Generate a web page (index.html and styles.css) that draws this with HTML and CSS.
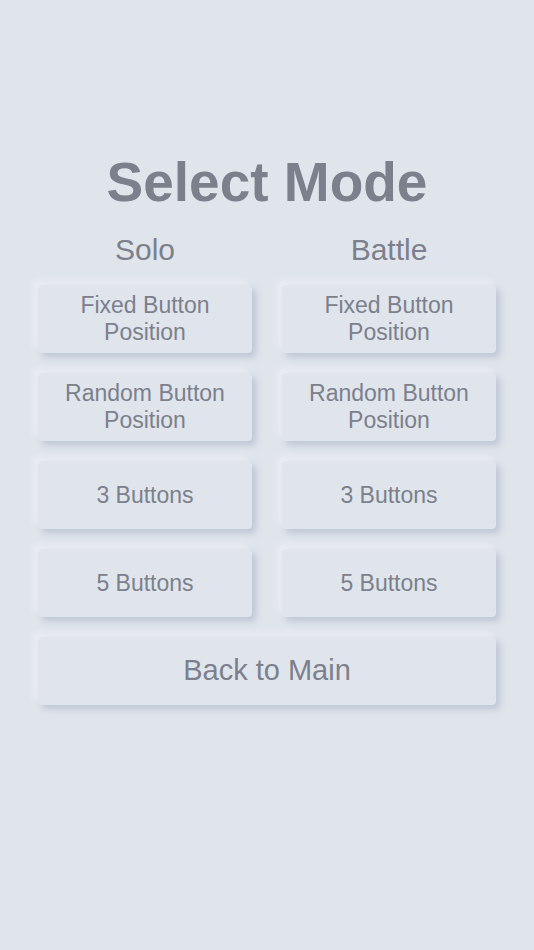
FILE: index.html
```html
<!DOCTYPE html>
<html lang="en">
<head>
  <meta charset="UTF-8">
  <meta name="viewport" content="width=device-width, initial-scale=1.0">
  <title>Select Mode</title>
  <link rel="stylesheet" href="styles.css">
</head>
<body>

<div class="menu">
  <h1 class="title">Select Mode</h1>

  <div class="modes">
    <div class="column-title">Solo</div>
    <div class="column-title">Battle</div>

    <button class="btn">Fixed Button<br>Position</button>
    <button class="btn">Fixed Button<br>Position</button>

    <button class="btn">Random Button<br>Position</button>
    <button class="btn">Random Button<br>Position</button>

    <button class="btn">3 Buttons</button>
    <button class="btn">3 Buttons</button>

    <button class="btn">5 Buttons</button>
    <button class="btn">5 Buttons</button>

    <button class="btn btn-wide">Back to Main</button>
  </div>
</div>

</body>
</html>
```

FILE: styles.css
```css
body {
  font-family: "Liberation Sans", Arial, sans-serif;
  background-color: #e0e5ec;
  color: #7b808c;
  margin: 0;
  padding: 0;
  min-height: 950px;
}
.menu {
  width: 458px;
  margin: 0 auto;
  padding: 151px 0 60px;
  text-align: center;
}
.title {
  font-size: 55px;
  line-height: 1.15;
  font-weight: bold;
  margin: 0 0 18px;
}
.modes {
  display: grid;
  grid-template-columns: 214px 214px;
  column-gap: 30px;
  row-gap: 20px;
}
.column-title {
  font-size: 30px;
  line-height: 1.15;
  margin-top: 1px;
  margin-bottom: -3px;
}
.btn {
  font-family: inherit;
  font-size: 23px;
  line-height: 1.15;
  color: #7b808c;
  background-color: #e0e5ec;
  border: none;
  border-radius: 4px;
  height: 68px;
  padding: 0;
  box-shadow: 4px 4px 7px rgba(163, 177, 198, 0.6), -4px -4px 7px rgba(255, 255, 255, 0.4);
  cursor: pointer;
}
.btn-wide {
  grid-column: 1 / 3;
  font-size: 29px;
}
```
